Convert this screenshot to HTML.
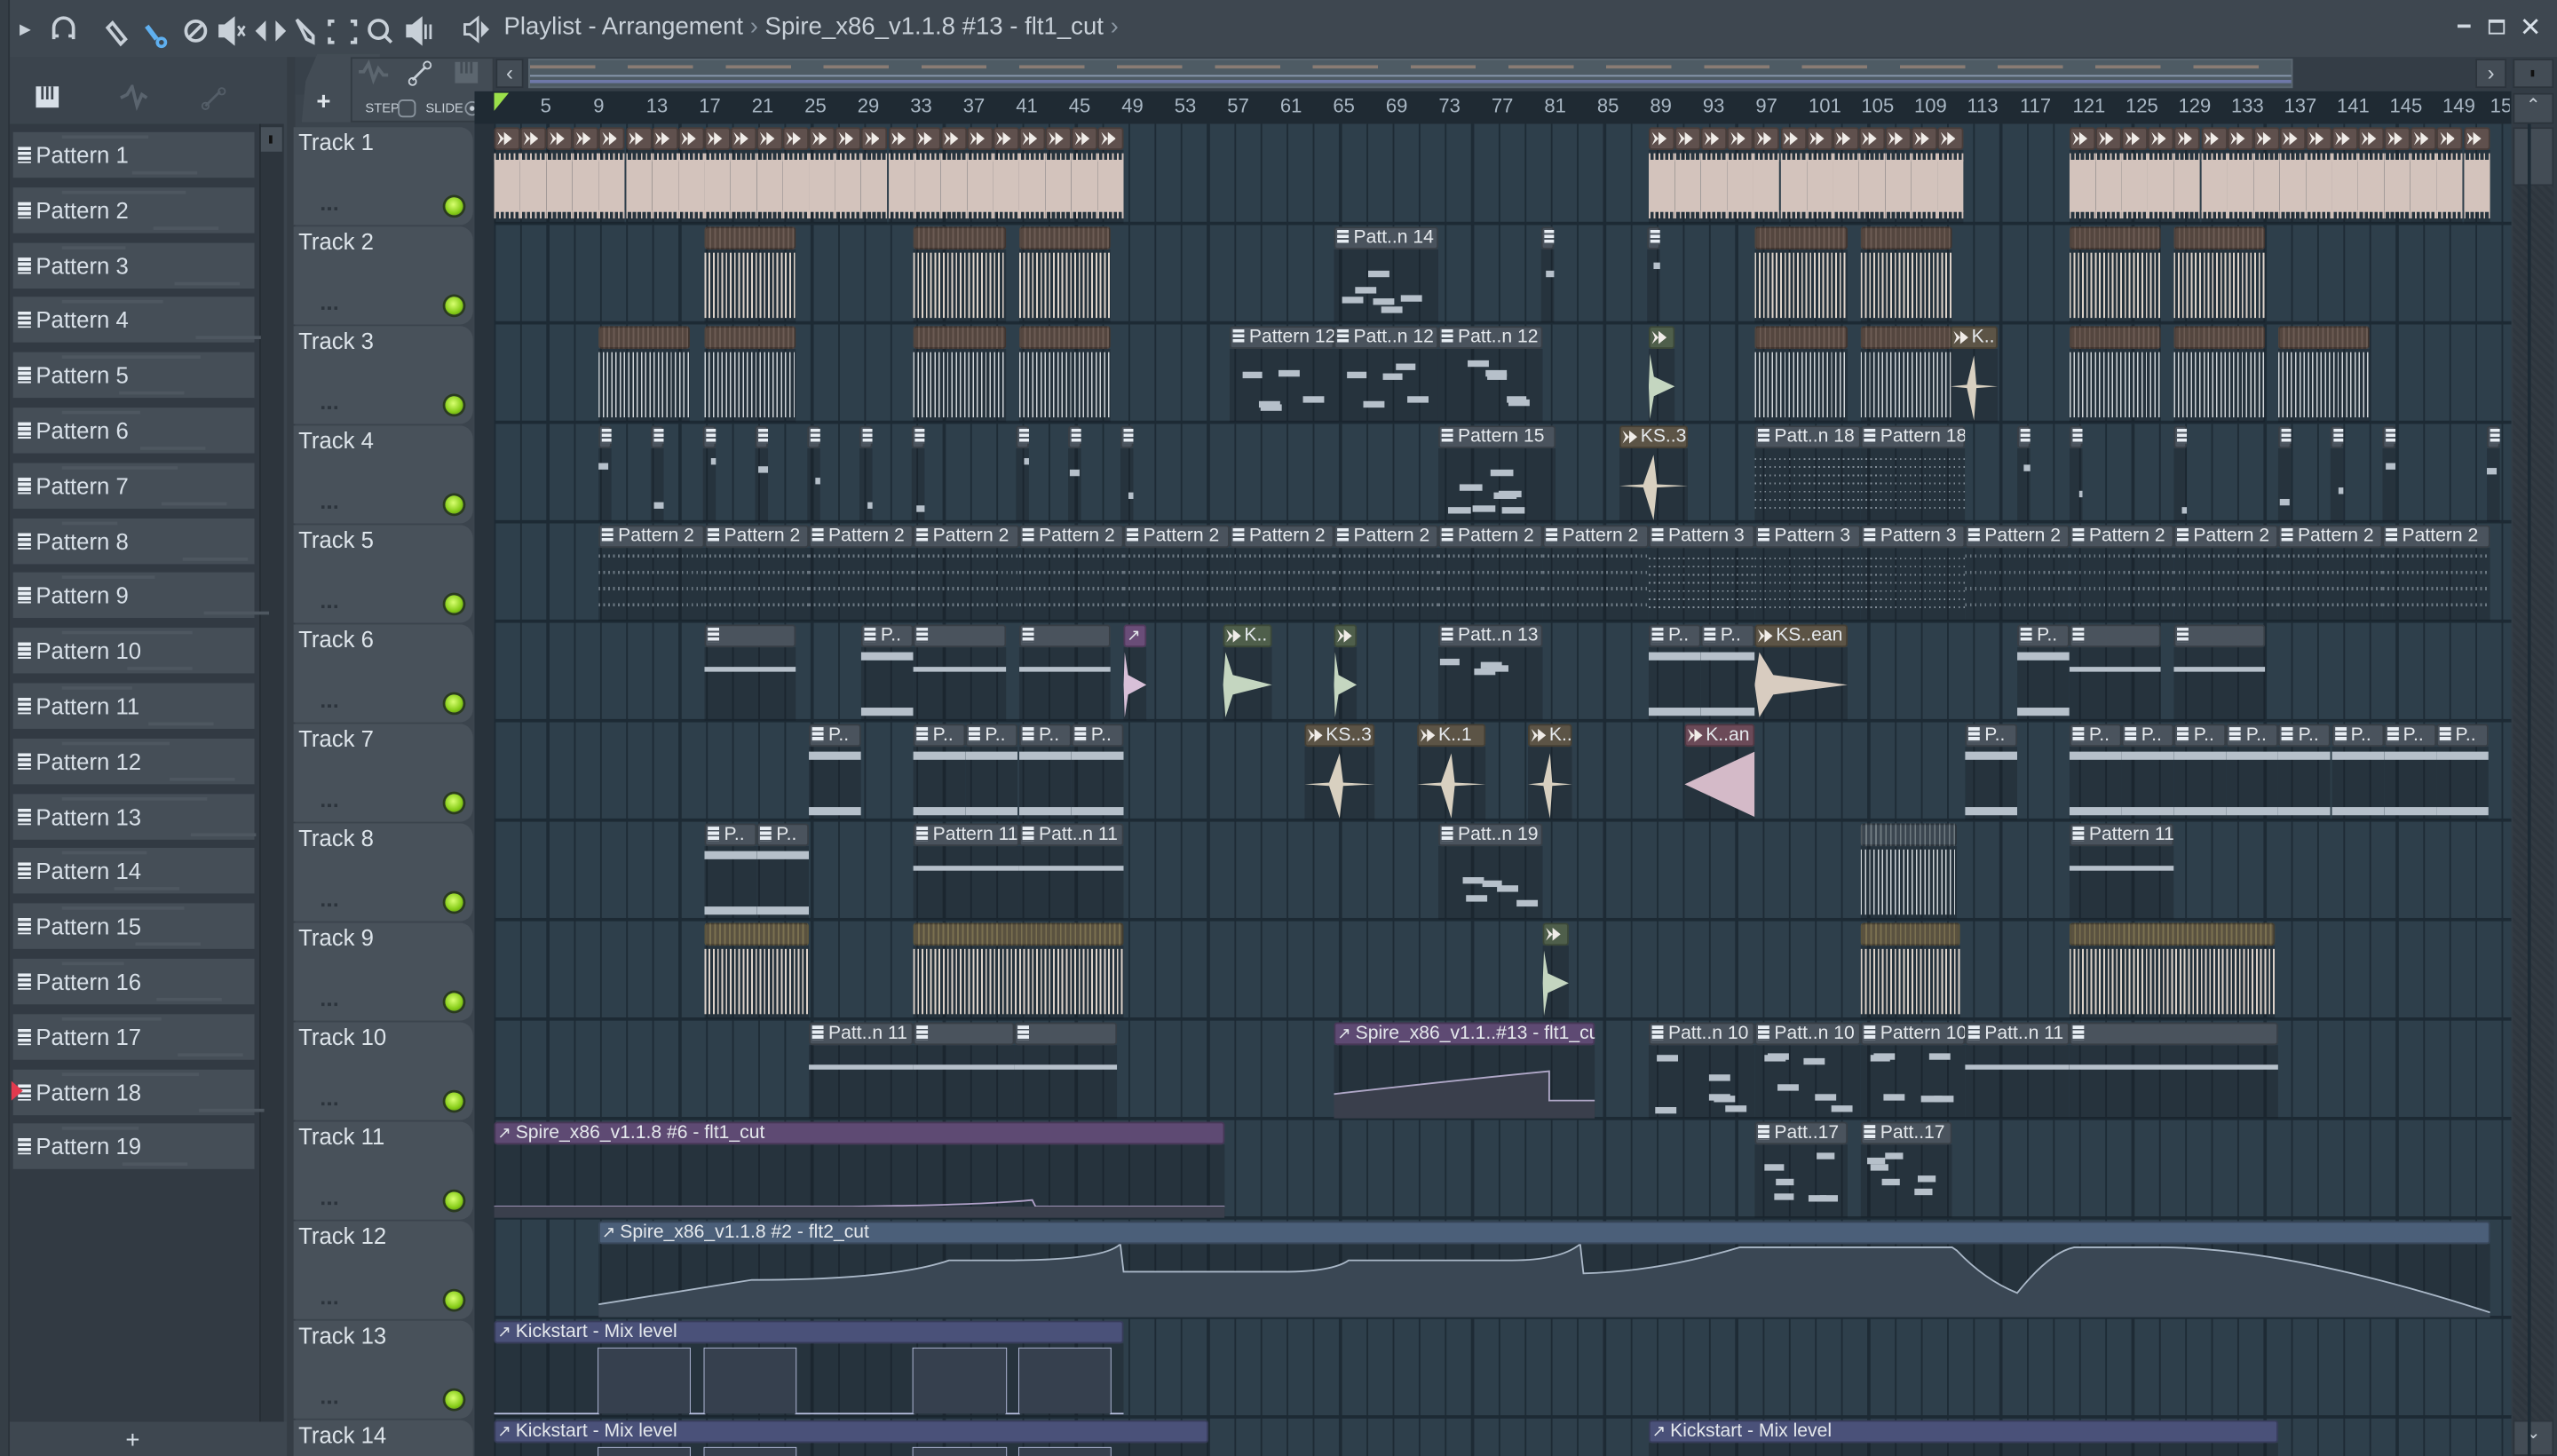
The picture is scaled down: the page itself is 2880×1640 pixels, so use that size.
<!DOCTYPE html>
<html><head><meta charset="utf-8">
<style>
*{box-sizing:border-box;margin:0;padding:0}
html,body{width:2880px;height:1640px;overflow:hidden;background:#3b444d}
#w{position:absolute;left:0;top:0;width:1568px;height:893px;transform:scale(1.83673,1.8365);transform-origin:0 0;font-family:"Liberation Sans Narrow","Liberation Sans",sans-serif;color:#d0d8e0;overflow:hidden;background:#3b444d}
.a{position:absolute}
.pi{position:absolute;left:8px;width:148px;height:28px;background:#454e57;font-size:14px;line-height:28px;padding-left:14px;color:#d8e0e8}
.pi:before{content:"";position:absolute;left:3px;top:9px;width:8px;height:10px;background:repeating-linear-gradient(#e8eef4 0 2px,#454e57 2px 3px)}
.th{position:absolute;left:180px;width:110px;height:60px;background:#48515a;border-radius:0 8px 8px 0;font-size:14px;padding:1px 0 0 3px;color:#dde4ea}
.led{position:absolute;left:93px;top:43px;width:11px;height:11px;border-radius:50%;background:radial-gradient(circle at 45% 40%,#d8ff70,#86cc18 60%,#4d7a10);box-shadow:0 0 0 1.5px #2a3a20}
.dots{position:absolute;left:17px;top:49px;width:12px;height:2px;background:repeating-linear-gradient(90deg,#2c343c 0 2px,transparent 2px 4px)}
.cl{position:absolute;overflow:hidden}
.hd{position:absolute;left:0;right:0;top:0;height:14px;font-size:11.5px;line-height:14px;white-space:nowrap;overflow:hidden;color:#e4e8ec;padding-left:2px;border-radius:2px;box-shadow:inset 0 0 0 1px rgba(0,0,0,.25)}
.bd{position:absolute;left:0;right:0;top:14px;bottom:0;background:rgba(22,30,38,.35)}
.rn{position:absolute;top:58px;font-size:12px;color:#a9b7c4}
.ar{display:inline-block;width:9px;height:8px;margin-right:2px;vertical-align:-1px;background:#f0ece8;clip-path:polygon(0 0,45% 50%,0 100%,20% 50%,0 0,0 0,45% 0,100% 50%,45% 100%,45% 0)}
</style></head><body><div id="w">

<div class="a" style="left:0;top:0;width:1568px;height:35px;background:#3e4750"></div>
<div class="a" style="left:12px;top:9px;font-size:14px;color:#c8d0d8">&#9656;</div>
<svg class="a" style="left:30px;top:8px" width="240" height="22" viewBox="0 0 240 22" fill="none" stroke="#c8d0d8" stroke-width="2">
<path d="M3 16V9a6 6 0 0 1 12 0v7"/><path d="M3 14h3M12 14h3"/>
<path d="M39 6l8 10-3 3-8-10z"/>
<path d="M60 8l6 8" stroke="#5fb0f0" stroke-width="3"/><circle cx="69" cy="18" r="2.5" stroke="#5fb0f0"/>
<circle cx="90" cy="11" r="6"/><path d="M86 15l8-8"/>
<path d="M105 8h3l5-4v14l-5-4h-3z" fill="#c8d0d8"/><path d="M116 8l4 6M120 8l-4 6" stroke-width="1.5"/>
<path d="M128 11l4-4v8zM144 11l-4-4v8z" fill="#c8d0d8"/>
<path d="M152 4l10 10v4l-4-2z"/>
<path d="M175 5h-3v3M185 5h3v3M175 18h-3v-3M185 18h3v-3"/>
<circle cx="202" cy="10" r="5.5"/><path d="M206 14l4 4"/>
<path d="M220 8h3l5-4v14l-5-4h-3z" fill="#c8d0d8"/><path d="M231 7v9M234 7v9" stroke-width="1.5"/>
</svg>
<svg class="a" style="left:283px;top:9px" width="20" height="18"><path d="M2 6h3l5-4v14l-5-4H2z" fill="none" stroke="#c8d0d8" stroke-width="1.5"/><path d="M12 4l5 5-5 5z" fill="#c8d0d8"/></svg>
<div class="a" style="left:309px;top:8px;font-size:15px;color:#c9d1d9;white-space:nowrap">Playlist - Arrangement <span style="color:#8a96a2">&#8250;</span> Spire_x86_v1.1.8 #13 - flt1_cut <span style="color:#8a96a2">&#8250;</span></div>
<div class="a" style="left:1507px;top:15px;width:8px;height:2px;background:#d0d8e0"></div>
<div class="a" style="left:1526px;top:12px;width:10px;height:9px;border:1.5px solid #d0d8e0;border-top-width:2.5px"></div>
<div class="a" style="left:1545px;top:7px;font-size:16px;color:#d8e0e8">&#10005;</div>

<div class="a" style="left:0;top:35px;width:176px;height:858px;background:#3b444d"></div>
<div class="a" style="left:0;top:0;width:6px;height:893px;background:#353e46;border-right:1px solid #2b333a"></div>
<svg class="a" style="left:22px;top:52px" width="130" height="16"><rect x="0" y="1" width="14" height="13" fill="#d8e0e8"/><path d="M4 1v8M7 1v8M10 1v8" stroke="#3b444d" stroke-width="1.5"/><path d="M52 8l4-2 3-5 3 12 3-7 3 2" stroke="#5a646e" fill="none" stroke-width="2"/><path d="M104 13l9-9" stroke="#545e68" stroke-width="1.5"/><circle cx="104" cy="13" r="2" fill="none" stroke="#545e68"/><circle cx="114" cy="4" r="2" fill="none" stroke="#545e68"/></svg>
<div class="a" style="left:6px;top:76px;width:168px;height:796px;background:#323a43"></div>
<div class="a" style="left:159px;top:76px;width:15px;height:796px;background:#2d353d;border-left:1px solid #262d34"></div>
<div class="a" style="left:160px;top:78px;width:13px;height:15px;background:#48515a"></div>
<div class="a" style="left:165px;top:83px;width:2px;height:5px;background:#111"></div>
<div class="a" style="left:6px;top:872px;width:170px;height:21px;background:#3e4750"></div>
<div class="a" style="left:77px;top:875px;font-size:15px;color:#d8e0e8">+</div>
<div id="pl"></div>
<div class="a" style="left:7px;top:663px;width:0;height:0;border-left:7px solid #e23a4e;border-top:6px solid transparent;border-bottom:6px solid transparent"></div>

<div class="a" style="left:176px;top:35px;width:5px;height:858px;background:#353d45"></div>
<div class="a" style="left:181px;top:35px;width:1387px;height:23px;background:#38414a"></div>
<div class="a" style="left:185px;top:33px;width:48px;height:42px;background:#434c55;clip-path:polygon(20% 0,100% 0,100% 100%,0 100%,5% 40%)"></div>
<div class="a" style="left:194px;top:54px;font-size:15px;font-weight:bold;color:#e0e6ec">+</div>
<div class="a" style="left:215px;top:35px;width:88px;height:40px;background:#434c55;border:1px solid #333b43"></div>
<svg class="a" style="left:218px;top:36px" width="82" height="20"><path d="M2 8h3l3-5 3 10 3-7 3 4h3" stroke="#5c666f" fill="none" stroke-width="2"/><path d="M35 13l8-8" stroke="#c8d0d8" stroke-width="1.5"/><circle cx="35" cy="14" r="2.2" fill="none" stroke="#c8d0d8"/><circle cx="44" cy="4" r="2.2" fill="none" stroke="#c8d0d8"/><rect x="61" y="2" width="14" height="13" fill="#5c666f"/><path d="M65 2v7M68 2v7M71 2v7" stroke="#434c55" stroke-width="1.5"/></svg>
<div class="a" style="left:224px;top:62px;font-size:8px;color:#c8d0d8">STEP</div>
<div class="a" style="left:244px;top:61px;width:11px;height:11px;border:1.5px solid #8a949e;border-radius:3px"></div>
<div class="a" style="left:261px;top:62px;font-size:8px;color:#c8d0d8">SLIDE</div>
<div class="a" style="left:285px;top:62px;width:9px;height:9px;border:1px solid #8a949e;border-radius:50%;background:radial-gradient(#c8d0d8 25%,transparent 35%)"></div>

<div class="a" style="left:303px;top:35px;width:1237px;height:21px;background:#343d46"></div>
<div class="a" style="left:304px;top:36px;width:17px;height:18px;background:#434c55;border:1px solid #2c343c;font-size:13px;line-height:15px;text-align:center;color:#c8d0d8">&#8249;</div>
<div class="a" style="left:324px;top:36px;width:1082px;height:18px;background:#4e5b64;border:1px solid #5a6670"></div>
<div class="a" style="left:325px;top:40px;width:1080px;height:2px;background:repeating-linear-gradient(90deg,#8a7c74 0 40px,#4e5b64 40px 60px)"></div>
<div class="a" style="left:325px;top:46px;width:1080px;height:1px;background:#8a9ab0"></div>
<div class="a" style="left:325px;top:49px;width:1080px;height:2px;background:#6e78a8"></div>
<div class="a" style="left:1518px;top:36px;width:19px;height:18px;background:#434c55;border:1px solid #2c343c;font-size:13px;line-height:15px;text-align:center;color:#c8d0d8">&#8250;</div>
<div class="a" style="left:1540px;top:35px;width:28px;height:858px;background:#333c45"></div>
<div class="a" style="left:1541px;top:36px;width:25px;height:18px;background:#434c55;border:1px solid #2c343c"></div>
<div class="a" style="left:1552px;top:43px;width:2px;height:4px;background:#111"></div>
<div class="a" style="left:1541px;top:57px;width:25px;height:19px;background:#434c55;border:1px solid #2c343c;font-size:11px;text-align:center;color:#c8d0d8">&#8963;</div>
<div class="a" style="left:1541px;top:78px;width:25px;height:36px;background:#434c55;border:1px solid #2c343c"></div>
<div class="a" style="left:1541px;top:114px;width:25px;height:757px;background:repeating-linear-gradient(45deg,#2e363e 0 2px,#323a42 2px 4px)"></div>
<div class="a" style="left:1541px;top:871px;width:25px;height:22px;background:#434c55;border:1px solid #2c343c;font-size:11px;text-align:center;color:#c8d0d8">&#8964;</div>

<div class="a" style="left:291px;top:56px;width:1249px;height:20px;background:#1f2a33"></div>
<div id="rl"></div>
<div class="a" style="left:303px;top:57px;width:0;height:0;border-left:9px solid #9be04a;border-bottom:11px solid transparent"></div>

<div id="gr" class="a" style="left:291px;top:76px;width:1249px;height:817px;background:#2e3f4b"></div>
<div id="th"></div>
<div id="cl"></div>

</div>
<script>
function h(p,s){document.getElementById(p).insertAdjacentHTML('beforeend',s)}
for(var i=1;i<=19;i++){var t=81+(i-1)*33.8;h('pl','<div class="pi" style="top:'+t+'px"><div class="a" style="left:30px;top:2px;width:'+(30+(i*23)%60)+'px;height:2px;background:#4e5760"></div><div class="a" style="left:'+(60+(i*13)%60)+'px;top:24px;width:40px;height:2px;background:#4e5760"></div><span style="position:relative">Pattern '+i+'</span></div>')}
for(var n=1;n<=149;n+=4){var x=303+(n-1)*8.1;h('rl','<div class="rn" style="left:'+(x+(n==1?1:-4))+'px">'+(n==1?'':n)+'</div>')}
h('rl','<div class="rn" style="left:1527px;width:12px;overflow:hidden">15</div>');
var g='';
for(var b=1;b<=155;b+=2){var x=(b-1)*8.1+12;g+='<div class="a" style="left:'+x+'px;top:0;width:1.3px;height:817px;background:#1e2b35"></div>'}
for(var k=0;k<14;k++){g+='<div class="a" style="left:0;top:'+(k*61+60)+'px;width:1249px;height:2px;background:#1d2a34"></div>'}
g+='<div class="a" style="left:0;top:0;width:12px;height:817px;background:#28323b"></div>';
document.getElementById('gr').innerHTML=g;
for(var k=1;k<=14;k++){var t=78+(k-1)*61;h('th','<div class="th" style="top:'+t+'px">Track '+k+'<div class="led"></div><div class="dots"></div></div>')}
function T(k){return 78+(k-1)*61}
var HC={aud:'#5f504d',pat:'#4a535d',grn:'#4f5f4b',pnk:'#6b4a58',pur:'#5e4a73',blu:'#4b5f79',ind:'#4a5179',kb:'#5c5446'};
function C(k,x1,x2,ty,lb,body,hbg){
 var t=T(k);var hb=hbg||HC[ty];var ic;
 if(ty=='pat')ic='<span style="display:inline-block;width:7px;height:9px;margin-right:3px;vertical-align:-1px;background:repeating-linear-gradient(#e8eef4 0 2px,'+hb+' 2px 3px)"></span>';
 else if(ty=='pur'||ty=='blu'||ty=='ind')ic='<span style="font-size:10px">&#8599; </span>';
 else ic='<span class="ar"></span>';
 h('cl','<div class="cl" style="left:'+x1+'px;top:'+t+'px;width:'+(x2-x1)+'px;height:59px"><div class="bd">'+(body||'')+'</div><div class="hd" style="background:'+hb+'">'+(lb===null?'':ic+lb)+'</div></div>');
}
var R=function(s){var v=Math.sin(s*9301+49297)*43758.5;return v-Math.floor(v)};
function bars(w,seed,n){var s='';for(var i=0;i<(n||4);i++){var x=R(seed+i)*w*0.8,y=4+R(seed+i+50)*34;s+='<div class="a" style="left:'+x+'px;top:'+y+'px;width:'+Math.max(6,w/5)+'px;height:4px;background:#b6c0ca"></div>'}return s}
var wave='<div class="a" style="left:0;right:0;top:6px;height:32px;background:#d3c3bc"></div><div class="a" style="left:0;right:0;top:2px;height:5px;background:repeating-linear-gradient(90deg,#d3c3bc 0 1px,transparent 1px 3px)"></div><div class="a" style="left:0;right:0;top:37px;height:5px;background:repeating-linear-gradient(90deg,#d3c3bc 0 1px,transparent 1px 3px)"></div>';
var stripe='<div class="a" style="left:0;right:0;top:2px;height:40px;background:repeating-linear-gradient(90deg,#ddd3ca 0 1px,#25323c 1px 2.6px)"></div>';
var stripeS='<div class="a" style="left:0;right:0;top:2px;height:40px;background:repeating-linear-gradient(90deg,#cfd4d8 0 0.8px,#25323c 0.8px 2.6px)"></div>';
var sh='repeating-linear-gradient(90deg,#6b5b53 0 1px,#54463f 1px 3px)';
var shG='repeating-linear-gradient(90deg,#7a7050 0 1px,#5a5240 1px 3px)';
function star(c){return '<svg class="a" style="left:0;top:0" width="100%" height="45" viewBox="0 0 40 45" preserveAspectRatio="none"><path d="M0 23L14 22 20 4 22 22 40 23 22 24 20 44 14 24z" fill="'+(c||'#d8d0c0')+'"/></svg>'}
function decay(c){return '<svg class="a" style="left:0;top:0" width="100%" height="45" viewBox="0 0 40 45" preserveAspectRatio="none"><path d="M0 23L2 3 8 17 40 23 8 29 2 43z" fill="'+c+'"/></svg>'}
[[303,689],[1011,1205],[1269,1527]].forEach(function(r){for(var x=r[0];x<r[1]-2;x+=16.1){C(1,x,Math.min(x+16.1,r[1]),'aud','',wave)}});
[[432,488],[560,617],[625,681],[1076,1133],[1141,1197],[1269,1325],[1333,1389]].forEach(function(r){C(2,r[0],r[1],'aud',null,stripe,sh)});
C(2,818,882,'pat','Patt..n 14',bars(64,3,6));C(2,945,953,'pat','',bars(8,7,1));C(2,1010,1018,'pat','',bars(8,9,1));
[[367,423],[432,488],[560,617],[625,681],[1076,1133],[1141,1197],[1269,1325],[1333,1389],[1397,1453]].forEach(function(r){C(3,r[0],r[1],'aud',null,stripeS,sh)});
C(3,754,818,'pat','Pattern 12',bars(64,11,5));C(3,818,882,'pat','Patt..n 12',bars(64,13,5));C(3,882,946,'pat','Patt..n 12',bars(64,17,5));
C(3,1011,1027,'grn','',decay('#c4d6c0'));C(3,1196,1225,'kb','K..',star());
[367,399,431,463,495,527,559,623,655,687,1237,1269,1333,1397,1429,1461,1525].forEach(function(x){C(4,x,x+8,'pat','',bars(8,x,1))});
C(4,882,954,'pat','Pattern 15',bars(70,21,7));C(4,993,1035,'kb','KS..3',star());
var dn='<div class="a" style="left:0;right:0;top:6px;height:32px;background:repeating-linear-gradient(90deg,#a8b2bc 0 1px,transparent 1px 3px);-webkit-mask:repeating-linear-gradient(#000 0 1px,transparent 1px 5px);opacity:.7"></div>';
C(4,1076,1141,'pat','Patt..n 18',dn);C(4,1141,1205,'pat','Pattern 18',dn);
var tk='<div class="a" style="left:0;right:0;top:4px;height:38px;background:repeating-linear-gradient(90deg,#9aa5b0 0 1px,transparent 1px 3px);-webkit-mask:repeating-linear-gradient(#000 0 2px,transparent 2px 10px);opacity:.6"></div>';
var p5=[367,432,496,560,625,689,754,818,882,946,1011,1076,1141,1205,1269,1333,1397,1461,1527];
for(var i=0;i<p5.length-1;i++){C(5,p5[i],p5[i+1],'pat',(i>=10&&i<=12)?'Pattern 3':'Pattern 2',(i>=10&&i<=12)?dn:tk)}
var bb='<div class="a" style="left:0;right:0;top:12px;height:3px;background:#b6c0ca"></div>';
var bb2='<div class="a" style="left:0;right:0;top:3px;height:5px;background:#b6c0ca"></div><div class="a" style="left:0;right:0;top:37px;height:5px;background:#b6c0ca"></div>';
C(6,432,488,'pat','',bb);C(6,528,560,'pat','P..',bb2);C(6,560,617,'pat','',bb);C(6,625,681,'pat','',bb);
C(6,689,703,'pur','',decay('#d8c0d8'),'#6a4d78');C(6,750,780,'grn','K..',decay('#c4d6c0'));C(6,818,832,'grn','',decay('#c4d6c0'));
C(6,882,946,'pat','Patt..n 13',bars(64,31,4));C(6,1011,1043,'pat','P..',bb2);C(6,1043,1076,'pat','P..',bb2);C(6,1076,1133,'kb','KS..ean',decay('#d8ccc0'));
C(6,1237,1269,'pat','P..',bb2);C(6,1269,1325,'pat','',bb);C(6,1333,1389,'pat','',bb);
[496,560,592,625,657].forEach(function(x){C(7,x,x+32,'pat','P..',bb2)});
C(7,800,843,'kb','KS..3',star());C(7,869,911,'kb','K..1',star());C(7,937,964,'kb','K..',star());
C(7,1033,1076,'pnk','K..an','<svg class="a" style="left:0;top:0" width="100%" height="45" viewBox="0 0 40 45" preserveAspectRatio="none"><path d="M0 23L40 3 40 43z" fill="#d4bac8"/></svg>');
C(7,1205,1237,'pat','P..',bb2);for(var x=1269;x<1525;x+=32.1)C(7,x,Math.min(x+32.1,1527),'pat','P..',bb2);
C(8,432,464,'pat','P..',bb2);C(8,464,496,'pat','P..',bb2);C(8,560,625,'pat','Pattern 11',bb);C(8,625,689,'pat','Patt..n 11',bb);
C(8,882,946,'pat','Patt..n 19',bars(64,41,5));C(8,1141,1200,'aud',null,stripeS,'repeating-linear-gradient(90deg,#6f7a80 0 1px,#3b4650 1px 3px)');C(8,1269,1333,'pat','Pattern 11',bb);
C(9,432,496,'aud',null,stripe,shG);C(9,560,689,'aud',null,stripe,shG);C(9,946,962,'grn','',decay('#c4d6c0'));C(9,1141,1202,'aud',null,stripe,shG);C(9,1269,1395,'aud',null,stripe,shG);
C(10,496,560,'pat','Patt..n 11',bb);C(10,560,622,'pat','',bb);C(10,622,685,'pat','',bb);
C(10,818,978,'pur','Spire_x86_v1.1..#13 - flt1_cut','<svg class="a" style="left:0;top:0" width="160" height="45"><path d="M0 30Q70 22 132 16L132 34 160 34V45H0z" fill="#3a3f4c"/><path d="M0 30Q70 22 132 16L132 34 160 34" stroke="#b0a8c8" fill="none"/></svg>');
C(10,1011,1076,'pat','Patt..n 10',bars(65,51,6));C(10,1076,1141,'pat','Patt..n 10',bars(65,55,6));C(10,1141,1205,'pat','Pattern 10',bars(64,59,6));C(10,1205,1269,'pat','Patt..n 11',bb);C(10,1269,1397,'pat','',bb);
C(11,303,751,'pur','Spire_x86_v1.1.8 #6 - flt1_cut','<svg class="a" style="left:0;top:0" width="448" height="45"><path d="M0 38H220Q300 37 330 34L332 38H450" stroke="#b0a0c8" fill="none"/><rect x="0" y="38" width="448" height="7" fill="#3a3f4c"/></svg>');
C(11,1076,1133,'pat','Patt..17',bars(57,61,6));C(11,1141,1197,'pat','Patt..17',bars(56,65,6));
C(12,367,1527,'blu','Spire_x86_v1.1.8 #2 - flt2_cut','<svg class="a" style="left:0;top:0" width="1160" height="45"><path d="M0 37L94 22Q180 22 215 10H250Q310 10 320 0L322 17H420Q450 17 460 10H560Q590 10 602 0L604 18Q650 17 700 2H830L833 4Q850 22 870 30Q890 5 905 2H960Q1040 3 1160 42V45H0z" fill="#3a4754"/><path d="M0 37L94 22Q180 22 215 10H250Q310 10 320 0L322 17H420Q450 17 460 10H560Q590 10 602 0L604 18Q650 17 700 2H830L833 4Q850 22 870 30Q890 5 905 2H960Q1040 3 1160 42" stroke="#aab8c8" fill="none"/></svg>');
var sq='<svg class="a" style="left:0;top:0" width="386" height="45"><path d="M0 43H64V3H120V43H129V3H185V43H257V3H314V43H322V3H378V43H386" stroke="#b8c0e0" fill="none"/><path d="M64 3H120V43H64zM129 3H185V43H129zM257 3H314V43H257zM322 3H378V43H322z" fill="#36404e"/></svg>';
C(13,303,689,'ind','Kickstart - Mix level',sq);
C(14,303,741,'ind','Kickstart - Mix level',sq);C(14,1011,1397,'ind','Kickstart - Mix level','');
</script>
</body></html>
